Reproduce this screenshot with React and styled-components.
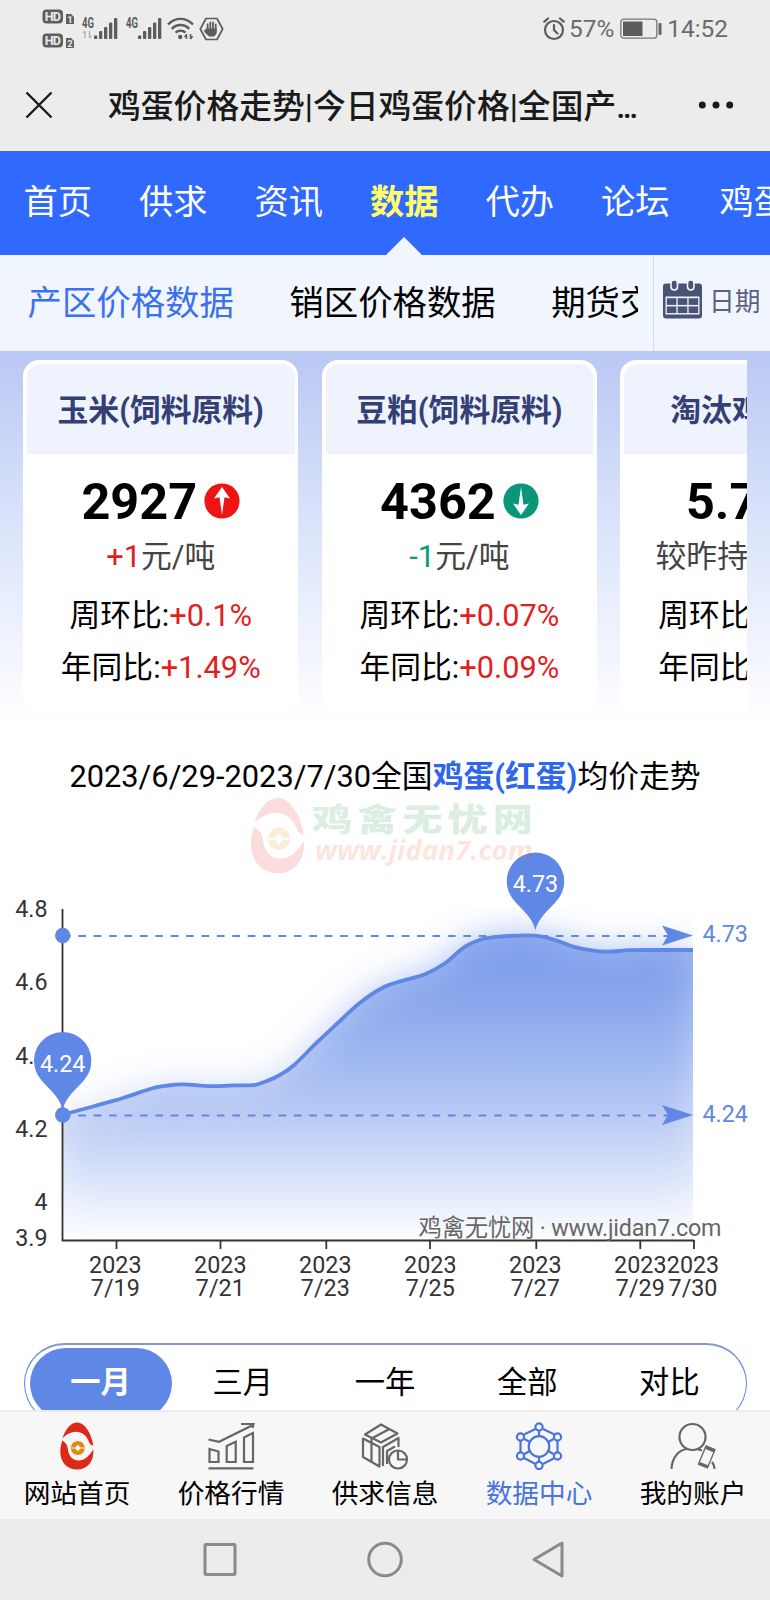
import styled, { createGlobalStyle, css } from 'styled-components';

const GlobalStyle = createGlobalStyle`
  * {
    box-sizing: border-box;
  }

  body {
    margin: 0;
    background: #fff;
    font-family: Roboto, 'Noto Sans CJK SC', sans-serif;
    color: #000;
  }
`;

const Page = styled.div`
  display: flex;
  flex-direction: column;
  width: 770px;
  height: 1600px;
  overflow: hidden;
`;

/* status bar */

const StatusBar = styled.div`
  display: flex;
  justify-content: space-between;
  height: 58px;
  padding: 0 42px 0 42px;
  background: #ececec;
  color: #6b6b6b;
`;

const StatusGroup = styled.div`
  display: flex;
  align-items: center;
`;

const StatusText = styled.span`
  font-size: 24.4px;
  line-height: 60px;
  margin-left: ${({ $left }) => $left}px;
`;

const StatusIcon = styled.svg`
  flex: none;
  display: block;
  overflow: visible;
  margin-left: ${({ $left = 0 }) => $left}px;
`;

/* browser title */

const TitleBar = styled.header`
  display: flex;
  align-items: center;
  height: 93px;
  padding: 0 36px 0 25px;
  background: #ececec;
`;

const PageTitle = styled.h1`
  flex: 1;
  margin: 0 0 0 55px;
  padding-top: 5px;
  font-size: 32.8px;
  font-weight: 500;
  line-height: 93px;
  color: #1a1a1a;
  white-space: nowrap;
`;

const Ellipsis = styled.span`
  letter-spacing: -2.6px;
`;

/* navigation */

const MainNav = styled.nav`
  display: flex;
  gap: 46.9px;
  height: 103.5px;
  padding-left: 23.5px;
  background: #3069fe;
  overflow: hidden;
`;

const NavItem = styled.a`
  position: relative;
  flex: none;
  font-size: 34.3px;
  line-height: 102px;
  color: #fff;

  &:last-child {
    margin-left: 3px;
  }

  ${({ $active }) =>
    $active &&
    css`
      color: #ffff6b;
      font-weight: 700;

      &::after {
        content: '';
        position: absolute;
        left: 50%;
        bottom: 0;
        margin-left: -18.5px;
        border: 18px solid transparent;
        border-top: 0;
        border-bottom-color: #f1f6fe;
      }
    `}
`;

const SubNav = styled.div`
  display: flex;
  height: 96.5px;
  background: #f1f6fe;
`;

const SubNavList = styled.div`
  display: flex;
  gap: 55.5px;
  width: 638px;
  padding-left: 27.5px;
  overflow: hidden;
`;

const SubNavItem = styled.a`
  flex: none;
  font-size: 34.4px;
  line-height: 96px;
  color: ${({ $active }) => ($active ? '#3b70ee' : '#000')};
`;

const DatePicker = styled.button`
  display: flex;
  align-items: center;
  gap: 7px;
  flex: 1;
  margin-left: 15px;
  padding: 0 0 8px 9px;
  border: 0;
  border-left: 1.5px solid #d0dbf5;
  background: none;
  font-family: inherit;
  font-size: 25.7px;
  color: #5a6180;
  white-space: nowrap;
`;

const DateLabel = styled.span`
  padding-top: 2px;
`;

/* price cards */

const Content = styled.main`
  height: 1059px;
  overflow: hidden;
`;

const CardsSection = styled.section`
  height: 374px;
  padding: 9px 23px 0;
  background: linear-gradient(#b9c8f4, #d6e0fa 40%, #fff);
`;

const CardList = styled.div`
  display: flex;
  gap: 23.7px;
  overflow: hidden;
`;

const Card = styled.article`
  flex: none;
  width: 275px;
  height: 353px;
  padding: 4px 3.5px 4px 4px;
  border-radius: 16px;
  background: #fff;
  text-align: center;
  white-space: nowrap;
`;

const CardTitle = styled.h2`
  height: 90px;
  margin: 0;
  border-radius: 13px 13px 0 0;
  background: #eff3fe;
  font-size: 30.8px;
  font-weight: 700;
  line-height: 94px;
  color: #343f74;
`;

const Price = styled.div`
  display: flex;
  align-items: center;
  justify-content: center;
  gap: 7px;
  height: 58px;
  margin-top: 18px;
  font-size: 50.4px;
  font-weight: 700;
`;

const Change = styled.div`
  height: 51px;
  padding-top: 1px;
  font-size: 30.8px;
  line-height: 52px;
  color: #444;
`;

const Ratios = styled.div`
  margin-top: 9px;
`;

const Ratio = styled.div`
  font-size: 30.8px;
  line-height: 51.6px;
`;

const Value = styled.span`
  color: ${({ $down }) => ($down ? '#0b9c80' : '#e21f1f')};
`;

/* chart */

const ChartTitle = styled.h2`
  margin: 28px 0 -1px;
  font-size: 30.8px;
  font-weight: 400;
  line-height: 48px;
  text-align: center;
  white-space: nowrap;
`;

const Highlight = styled.strong`
  color: #2f66ee;
`;

const ChartSvg = styled.svg`
  display: block;
  width: 770px;
  height: 510px;
  overflow: visible;
  font-size: 23.3px;
  fill: #333;
`;

const RangeTabs = styled.div`
  display: grid;
  grid-template-columns: repeat(5, 1fr);
  width: 723px;
  height: 81px;
  margin: 33px 0 0 23.5px;
  padding: 3px 5px 4px;
  border: 1px solid #5f87e6;
  border-top: 2px solid #8497d2;
  border-radius: 41px;
`;

const RangeTab = styled.button`
  padding: 0 0 8px;
  border: 0;
  border-radius: 36px;
  background: none;
  font-family: inherit;
  font-size: 30.3px;
  color: #000;

  ${({ $active }) =>
    $active &&
    css`
      background: #5f87e6;
      color: #fff;
      font-weight: 700;
    `}
`;

/* bottom bars */

const TabBar = styled.nav`
  display: grid;
  grid-template-columns: repeat(5, 1fr);
  height: 109px;
  border-top: 2px solid #ececec;
  background: #f7f7f7;
`;

const Tab = styled.a`
  display: flex;
  flex-direction: column;
  align-items: center;
  padding-top: 10px;
  font-size: 26.7px;
  line-height: 48px;
  white-space: nowrap;
  color: ${({ $active }) => ($active ? '#4a74dd' : '#000')};
`;

const TabIcon = styled.svg`
  flex: none;
  width: 48px;
  height: 48px;
  fill: none;
  stroke: ${({ $active }) => ($active ? '#4a74dd' : '#666')};
  stroke-width: 2.2;
`;

const SystemNav = styled.div`
  display: flex;
  justify-content: center;
  align-items: center;
  gap: 128px;
  height: 81px;
  padding-right: 2px;
  background: #ececec;
`;

const SystemIcon = styled.svg`
  width: 36px;
  height: 40px;
  overflow: visible;
  fill: none;
  stroke: #8a8a8a;
  stroke-width: 3;
  stroke-linejoin: round;
`;

const navItems = ['首页', '供求', '资讯', '数据', '代办', '论坛', '鸡蛋价格'];
const subNavItems = ['产区价格数据', '销区价格数据', '期货交易'];
const ranges = ['一月', '三月', '一年', '全部', '对比'];

const cards = [
  { title: '玉米(饲料原料)', price: '2927', trend: 'up', change: '+1', unit: '元/吨', week: '+0.1%', year: '+1.49%' },
  { title: '豆粕(饲料原料)', price: '4362', trend: 'down', change: '-1', unit: '元/吨', week: '+0.07%', year: '+0.09%' },
  { title: '淘汰鸡(红鸡)', price: '5.73', trend: 'up', change: '', unit: '较昨持平 元/斤', week: '+0.53%', year: '+0.88%' },
];

const yLabels = [
  ['4.8', 909],
  ['4.6', 982.3],
  ['4.4', 1055.5],
  ['4.2', 1128.7],
  ['4', 1202],
  ['3.9', 1238.3],
];

const xLabels = [
  ['7/19', 115.3],
  ['7/21', 220.3],
  ['7/23', 325.3],
  ['7/25', 430.3],
  ['7/27', 535.3],
  ['7/29', 640.3],
  ['7/30', 693],
];

const points = [
  [63, 1114.5], [93, 1106.5], [123, 1098], [150, 1089], [166, 1085.8], [183, 1084.3],
  [210, 1086.2], [233, 1085.4], [253, 1085.2], [263, 1082.5], [278, 1076], [293, 1066],
  [316.7, 1042.7], [336.7, 1024], [360, 1002.7], [384, 987], [402, 980.9], [425, 974.2],
  [445, 963.3], [465, 946.7], [485, 938.5], [508, 936], [535, 935.7], [555, 940],
  [575, 947.2], [604, 951.7], [630, 950.2], [660, 950], [693, 950],
];

const smoothPath = (pts) =>
  pts.slice(1).reduce((d, p, i) => {
    const p0 = pts[i - 1] || pts[i];
    const p1 = pts[i];
    const p3 = pts[i + 2] || p;
    const c1 = [p1[0] + (p[0] - p0[0]) / 6, p1[1] + (p[1] - p0[1]) / 6];
    const c2 = [p[0] - (p3[0] - p1[0]) / 6, p[1] - (p3[1] - p1[1]) / 6];
    return `${d} C${c1} ${c2} ${p}`;
  }, `M${pts[0]}`);

const linePath = smoothPath(points);
const areaPath = `${linePath} V1240 H63 Z`;

const Signal = ({ left, data }) => (
  <StatusIcon $left={left} width="36" height="24" fill="#5c5c5c">
    <text x="0" y="11" fontSize="14" fontWeight="700" textLength="12" lengthAdjust="spacingAndGlyphs">4G</text>
    {data && <path d="M3 14v7M1 16l2-2M7.500 14v7M9.500 19l-2 2" stroke="#b5b5b5" strokeWidth="1.500" />}
    <rect x="12" y="18.500" width="3.300" height="3.500" rx="1" />
    <rect x="17" y="14" width="3.300" height="8" rx="1" />
    <rect x="22" y="10" width="3.300" height="12" rx="1" />
    <rect x="27" y="5.500" width="3.300" height="16.500" rx="1" />
    <rect x="32" y="1" width="3.300" height="21" rx="1" />
  </StatusIcon>
);

const SimBadges = () => (
  <StatusIcon width="33" height="40">
    {[1, 2].map((n) => (
      <g key={n} transform={`translate(0 ${(n - 1) * 24})`} fill="#5f5f5f" fontWeight="700">
        <rect x="0.500" y="0.500" width="20.500" height="14" rx="4" />
        <text x="10.800" y="12" fontSize="12.500" fill="#ececec" textAnchor="middle" textLength="16">HD</text>
        <path d="M24 5h5l3 3v7h-8z" />
        <text x="28" y="13.800" fontSize="9.500" fill="#ececec" textAnchor="middle">{n}</text>
      </g>
    ))}
  </StatusIcon>
);

const Wifi = () => (
  <StatusIcon $left={5.5} width="27" height="24" fill="none" stroke="#5c5c5c" strokeWidth="2.400">
    <path d="M1 7.500C8.500 0 18.500 0 26 7.500M4.800 11.800c5-5 12.400-5 17.400 0M8.500 15.700c3-2.800 7-2.800 10 0" />
    <circle cx="13.200" cy="20" r="2.200" fill="#5c5c5c" stroke="none" />
    <path d="M19.500 17v5M17.500 20l2-2.500M23.500 17v5M25.500 19l-2 3" strokeWidth="1.500" />
  </StatusIcon>
);

const HandBadge = () => (
  <StatusIcon $left={5} width="25" height="24" fill="none" stroke="#5c5c5c" strokeLinecap="round" strokeLinejoin="round">
    <path d="M7 1.500h11l5.700 10.500L18 22.500H7L1.300 12z" strokeWidth="1.700" />
    <path d="M8.600 7.500v6M11.300 5.500v8M14 5.500v8M16.700 7.500v6" strokeWidth="1.800" />
    <path d="M7.800 12h9.400v3.500c0 1.500-1 2.500-2 3.500h-5c-2-1.500-3.700-3-4.700-5z" fill="#5c5c5c" strokeWidth="1" />
  </StatusIcon>
);

const Alarm = () => (
  <StatusIcon width="22" height="24" fill="none" stroke="#5c5c5c" strokeWidth="2.200" strokeLinecap="round">
    <circle cx="11" cy="13" r="9" />
    <path d="M11 8v5l3.500 3.500M1.300 4.700 5 1.500M20.700 4.700 17 1.500" />
  </StatusIcon>
);

const Battery = () => (
  <StatusIcon $left={6} width="42" height="22">
    <rect x="0.800" y="1.200" width="36" height="19" rx="3" fill="none" stroke="#777" strokeWidth="1.300" />
    <rect x="3" y="3.500" width="19.500" height="14.500" fill="#5c5c5c" />
    <rect x="38.500" y="5" width="3" height="12" rx="1" fill="#666" />
  </StatusIcon>
);

const Calendar = () => (
  <svg width="39" height="40" viewBox="0 0 39 40">
    <rect x="0" y="4.500" width="39" height="35" rx="3" fill="#4b5374" />
    <rect x="2.500" y="17.500" width="34" height="18" fill="#f1f6fe" />
    {[19.2, 27.4].map((y) =>
      [3.8, 14.7, 25.6].map((x) => <rect key={`${x}-${y}`} x={x} y={y} width="9.600" height="6.700" fill="#4b5374" />)
    )}
    <rect x="8" y="1" width="6.500" height="10" rx="3.200" fill="#4b5374" stroke="#f1f6fe" strokeWidth="1.600" />
    <rect x="24.500" y="1" width="6.500" height="10" rx="3.200" fill="#4b5374" stroke="#f1f6fe" strokeWidth="1.600" />
  </svg>
);

const TrendIcon = ({ down }) => (
  <svg width="36" height="36" viewBox="0 0 36 36">
    <circle cx="18" cy="18" r="17.600" fill={down ? '#0b9579' : '#ee1414'} />
    <path
      d="M18 4l8 11.500-5.500-1.200L18 32l-2.500-17.700-5.500 1.200z"
      fill="#fff"
      transform={down ? 'rotate(180 18 18)' : undefined}
    />
  </svg>
);

/* drawn in a 34x47 box */
const EggLogo = ({ coin = '#e08a10', hole = '#f7f7f7' }) => (
  <>
    <path d="M2 16C5 7 10 0 17 0s14 10 16 23c-2 0-3-1-4-3C25 8 12 5 2 16z" />
    <path d="M0 29C0 24 1 21 2 18c3 2 5 4 5.500 8C8 33 12 38 18 38c7 0 11-5 15-11 1 12-6 20-16 20S0 40 0 29z" />
    <circle cx="17.500" cy="25.500" r="7" fill={coin} />
    <path d="M10.500 25.500h14M17.500 22.500l2.500 3-2.500 3-2.500-3z" fill={hole} stroke={hole} strokeWidth="0.900" />
  </>
);

const Pin = ({ x, y, label }) => (
  <g transform={`translate(${x} ${y})`}>
    <path d="M-28.100 6.500A28.700 28.700 0 1 1 28.100 6.500C25 24 4 31 0 50C-4 31-25 24-28.100 6.500z" fill="#5f87e6" />
    <text x="0" y="11.500" textAnchor="middle" fill="#fff">{label}</text>
  </g>
);

const MarkLine = ({ y, label }) => (
  <g fill="#5f87e6">
    <path d={`M62.900 ${y + 0.5}H668`} stroke="#6088e4" strokeWidth="1.800" strokeDasharray="7.700 7.700" />
    <circle cx="62.700" cy={y} r="7.700" />
    <path d={`M693 ${y}l-31-10 6 10-6 10z`} />
    <text x="702.500" y={y + 6.8}>{label}</text>
  </g>
);

const PriceChart = () => (
  <ChartSvg viewBox="0 800 770 510">
    <defs>
      <linearGradient id="area" gradientUnits="userSpaceOnUse" x1="0" y1="936" x2="0" y2="1240">
        <stop offset="0" stopColor="#5f87e6" stopOpacity="0.610" />
        <stop offset="1" stopColor="#5f87e6" stopOpacity="0" />
      </linearGradient>
      <filter id="glow" x="-20%" y="-30%" width="140%" height="160%">
        <feGaussianBlur stdDeviation="18" />
      </filter>
      <clipPath id="plot">
        <rect x="62" y="907" width="631" height="333" />
      </clipPath>
    </defs>

    <g clipPath="url(#plot)">
      <path d={areaPath} fill="url(#area)" filter="url(#glow)" />
      <path d={areaPath} fill="url(#area)" />
    </g>

    <path d="M62.500 909V1240.500H694" fill="none" stroke="#333" strokeWidth="1.800" />
    {[116.5, 220.5, 326.3, 430, 536.3, 640.3, 694].map((x) => (
      <path key={x} d={`M${x} 1240v9`} stroke="#333" strokeWidth="1.800" />
    ))}
    {yLabels.map(([label, y]) => (
      <text key={label} x="47.500" y={y + 8} textAnchor="end">{label}</text>
    ))}
    {xLabels.map(([label, x]) => (
      <g key={label} textAnchor="middle">
        <text x={x} y="1273">2023</text>
        <text x={x} y="1296">{label}</text>
      </g>
    ))}

    <path d={linePath} fill="none" stroke="#5f87e6" strokeWidth="3.800" clipPath="url(#plot)" />
    <MarkLine y={935.5} label="4.73" />
    <MarkLine y={1115} label="4.24" />
    <Pin x={62.7} y={1060} label="4.24" />
    <Pin x={535.5} y={880.5} label="4.73" />

    <text x="418.500" y="1236" fill="#666" textLength="303">鸡禽无忧网 · www.jidan7.com</text>

    <g opacity="0.150">
      <g transform="translate(251 798) scale(1.600 1.600)" fill="#e2231a">
        <EggLogo hole="#fff" />
      </g>
      <text x="312" y="831" fontSize="32" fontWeight="900" fill="#1e8a3c" letterSpacing="4" textLength="226" lengthAdjust="spacingAndGlyphs">鸡禽无忧网</text>
      <text x="315" y="860" fontSize="26" fontFamily="Open Sans" fontWeight="700" fontStyle="italic" fill="#f4511e" textLength="218" lengthAdjust="spacingAndGlyphs">www.jidan7.com</text>
    </g>
  </ChartSvg>
);

const HomeIcon = () => (
  <TabIcon viewBox="0 0 48 48">
    <g transform="translate(7.300 0.500)" fill="#dc2a17" stroke="none">
      <EggLogo />
    </g>
  </TabIcon>
);

const TrendsIcon = () => (
  <TabIcon viewBox="0 0 48 48">
    <path d="M1.500 46.300h45M2.500 27l9 2.500V40h-9zM19.700 24l9-4.300V40h-9zM37 15.500l9-4.500v29h-9zM1.500 17.500l10.500 2.300L45 3.500M34 2h12.500l-1 4" />
  </TabIcon>
);

const SupplyIcon = () => (
  <TabIcon viewBox="0 0 48 48" strokeLinejoin="round">
    <path d="M20 2.500 36.500 11.500 20 20.500 4 12.500z M2 16.500 18.500 25v19.500L2 35z" />
    <path d="M28.500 7 10.500 16.500v23M22 44V25l15.500-9v9M26 42V29l8-4.500" />
    <circle cx="37" cy="37.500" r="9" />
    <path d="M37 28.500v9h9" />
  </TabIcon>
);

const DataIcon = () => (
  <TabIcon $active viewBox="0 0 48 48">
    <path d="M20.500 7 9 12.500M28 7l11.500 5.500M5.500 19v11M42.500 19v11M9 36l11.500 6M39.500 36 28 42M24 9v6M24 35v5M9.500 17l6 3.500M38.500 17l-6 3.500M9.500 32l6-3.500M38.500 32l-6-3.500" />
    <circle cx="24" cy="24.500" r="10.300" />
    {[[24, 5], [5.5, 15], [42.500, 15], [5.5, 34], [42.500, 34], [24, 43.500]].map(([x, y]) => (
      <circle key={`${x}-${y}`} cx={x} cy={y} r="3.600" />
    ))}
  </TabIcon>
);

const AccountIcon = () => (
  <TabIcon viewBox="0 0 48 48">
    <circle cx="23.500" cy="15" r="13" />
    <path d="M2.500 47C3 35 10 28 18 27M28 27l5 1.500M43 40c1.500 2 2.500 4 2.500 7" />
    <path d="M37 24l9 3.700-7.500 18-9-3.700z" strokeWidth="1.400" />
    <path d="M37 25.500l8.500 3.500M30.500 41.500l8.500 3.500" strokeWidth="3" />
  </TabIcon>
);

const tabs = [
  { label: '网站首页', Icon: HomeIcon },
  { label: '价格行情', Icon: TrendsIcon },
  { label: '供求信息', Icon: SupplyIcon },
  { label: '数据中心', Icon: DataIcon, active: true },
  { label: '我的账户', Icon: AccountIcon },
];

const PriceCard = ({ title, price, trend, change, unit, week, year }) => (
  <Card>
    <CardTitle>{title}</CardTitle>
    <Price>
      {price}
      <TrendIcon down={trend === 'down'} />
    </Price>
    <Change>
      <Value $down={trend === 'down'}>{change}</Value>
      {unit}
    </Change>
    <Ratios>
      <Ratio>周环比:<Value>{week}</Value></Ratio>
      <Ratio>年同比:<Value>{year}</Value></Ratio>
    </Ratios>
  </Card>
);

const App = () => (
  <Page>
    <GlobalStyle />
    <StatusBar>
      <StatusGroup>
        <SimBadges />
        <Signal left={7} data />
        <Signal left={7.5} />
        <Wifi />
        <HandBadge />
      </StatusGroup>
      <StatusGroup>
        <Alarm />
        <StatusText $left={4}>57%</StatusText>
        <Battery />
        <StatusText $left={5}>14:52</StatusText>
      </StatusGroup>
    </StatusBar>

    <TitleBar>
      <svg width="28" height="28" fill="none" stroke="#1a1a1a" strokeWidth="2.400">
        <path d="M1.500 1.500l25 25M26.500 1.500l-25 25" />
      </svg>
      <PageTitle>
        鸡蛋价格走势|今日鸡蛋价格|全国产<Ellipsis>...</Ellipsis>
      </PageTitle>
      <svg width="36" height="10" fill="#1a1a1a">
        <circle cx="4.300" cy="5" r="3.500" />
        <circle cx="18" cy="5" r="3.500" />
        <circle cx="31.700" cy="5" r="3.500" />
      </svg>
    </TitleBar>

    <MainNav>
      {navItems.map((item) => (
        <NavItem key={item} $active={item === '数据'}>{item}</NavItem>
      ))}
    </MainNav>
    <SubNav>
      <SubNavList>
        {subNavItems.map((item, i) => (
          <SubNavItem key={item} $active={i === 0}>{item}</SubNavItem>
        ))}
      </SubNavList>
      <DatePicker>
        <Calendar />
        <DateLabel>日期</DateLabel>
      </DatePicker>
    </SubNav>

    <Content>
      <CardsSection>
        <CardList>
          {cards.map((card) => (
            <PriceCard key={card.title} {...card} />
          ))}
        </CardList>
      </CardsSection>
      <ChartTitle>
        2023/6/29-2023/7/30全国<Highlight>鸡蛋(红蛋)</Highlight>均价走势
      </ChartTitle>
      <PriceChart />
      <RangeTabs>
        {ranges.map((range, i) => (
          <RangeTab key={range} $active={i === 0}>{range}</RangeTab>
        ))}
      </RangeTabs>
    </Content>

    <TabBar>
      {tabs.map(({ label, Icon, active }) => (
        <Tab key={label} $active={active}>
          <Icon />
          {label}
        </Tab>
      ))}
    </TabBar>
    <SystemNav>
      <SystemIcon viewBox="0 0 36 40">
        <rect x="3" y="4.500" width="30" height="30" rx="1" />
      </SystemIcon>
      <SystemIcon viewBox="0 0 36 40">
        <circle cx="19" cy="19.500" r="16.300" />
      </SystemIcon>
      <SystemIcon viewBox="0 0 36 40">
        <path d="M32 3v33L4 19.500z" />
      </SystemIcon>
    </SystemNav>
  </Page>
);

export default App;
